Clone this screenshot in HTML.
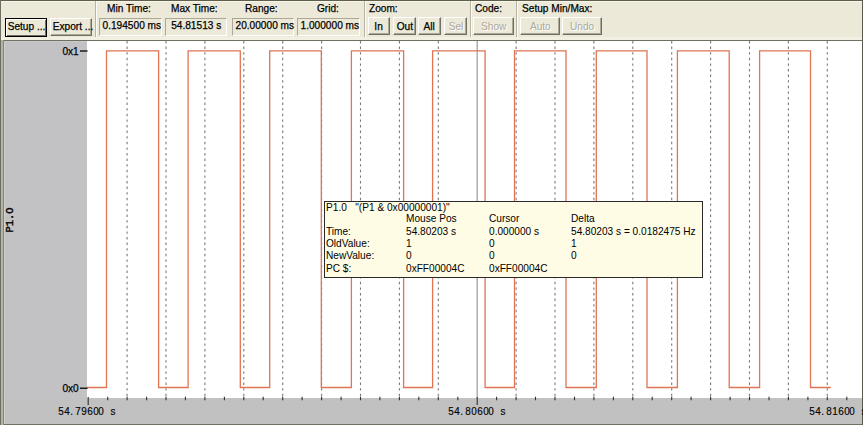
<!DOCTYPE html>
<html><head><meta charset="utf-8">
<style>
*{margin:0;padding:0;box-sizing:border-box}
html,body{width:863px;height:425px;overflow:hidden;background:#ece9d8;font-family:"Liberation Sans",sans-serif;font-size:11px;color:#000}
.t{display:inline-block;transform:scaleX(0.92);transform-origin:50% 50%;-webkit-text-stroke:0.25px #000}
.dis .t,#tip .t{-webkit-text-stroke:0}
.lbl .t,#tip .t{transform-origin:0 50%}
.t.r{transform-origin:100% 50%}
.a{position:absolute}
.lbl{position:absolute;top:1px;height:14px;line-height:14px;white-space:nowrap}
.box{position:absolute;top:18px;height:18px;border-top:1px solid #aca899;border-left:1px solid #aca899;border-bottom:1px solid #fff;border-right:1px solid #fff;line-height:13px;text-align:center;white-space:nowrap}
.btn{position:absolute;top:17px;height:18px;background:#ece9d8;border-top:1px solid #fff;border-left:1px solid #fff;border-right:1px solid #716f64;border-bottom:1px solid #716f64;box-shadow:inset -1px -1px 0 #aca899;text-align:center;line-height:15px;padding-top:1px;white-space:nowrap}
.dis{color:#aca899;text-shadow:1px 1px 0 #fff}
.sep{position:absolute;top:1px;height:36px;width:2px;border-left:1px solid #b9b5a5;border-right:1px solid #fcfbf5}
.mono{font-family:"Liberation Mono",monospace}
.ax{position:absolute;top:404.5px;font-family:"Liberation Sans",sans-serif;font-size:11px;white-space:nowrap;height:12px;line-height:12px;margin-top:0}
.ax i{display:inline-block;width:5.75px;text-align:center;font-style:normal}
.ax i.n{transform:scaleX(0.9);-webkit-text-stroke:0.15px #000}
.g{stroke:#787878;stroke-width:1.1;stroke-dasharray:2.4 3.2}
#tip{position:absolute;left:324px;top:201px;width:379px;height:77px;background:#fffce6;border:1px solid #2a2a2a;font-size:11px;line-height:12px;margin-top:0}
#tip div{position:absolute;white-space:nowrap}
</style></head><body>
<div class="a" style="left:0;top:0;width:863px;height:1px;background:#5f5f4c"></div>
<div class="a" style="left:0;top:1px;width:863px;height:1px;background:#f8f6ea"></div>
<div class="a" style="left:0;top:0;width:1px;height:425px;background:#6e6e62"></div>
<div class="a" style="left:1px;top:37px;width:862px;height:3px;background:#f2f0e3"></div>
<div class="a" style="left:3px;top:40px;width:860px;height:385px;background:#6f6f64"></div>
<div class="a" style="left:1px;top:40px;width:2px;height:385px;background:#b4b4a6"></div>
<div class="a" style="left:3px;top:40px;width:1px;height:385px;background:#84847a"></div>
<div class="a" style="left:4px;top:41px;width:1px;height:383px;background:#d0d0cc"></div>
<div class="a" style="left:5px;top:41px;width:82px;height:357px;background:#c2c1c3;border-top:1px solid #cacac6"></div>
<div class="a" style="left:87px;top:41px;width:775px;height:357px;background:#fff"></div>
<div class="a" style="left:5px;top:398px;width:857px;height:26px;background:#c2c1c2"></div>
<div class="a" style="left:862px;top:0;width:1px;height:425px;background:#5a5a50"></div>

<!-- toolbar -->
<div class="btn" id="b_setup" style="left:5px;top:18px;width:42px;height:19px;padding-top:0;border:1px solid #000;box-shadow:inset 1px 1px 0 #fff,inset -1px -1px 0 #716f64"><span class="t">Setup ...</span></div>
<div class="btn" id="b_export" style="left:50px;top:18px;width:42px;height:18px;padding-top:0"><span class="t">Export ...</span></div>
<div class="sep" style="left:95px"></div>

<div class="lbl" id="l_min" style="left:99px;width:63px;text-align:center"><span class="t">Min Time:</span></div>
<div class="box" id="x_min" style="left:99px;width:63px"><span class="t">0.194500 ms</span></div>
<div class="lbl" style="left:165px;width:62px;text-align:center"><span class="t">Max Time:</span></div>
<div class="box" style="left:165px;width:62px"><span class="t">54.81513 s</span></div>
<div class="lbl" style="left:232px;width:62px;text-align:center"><span class="t">Range:</span></div>
<div class="box" style="left:232px;width:62px"><span class="t">20.00000 ms</span></div>
<div class="lbl" style="left:297px;width:63px;text-align:center"><span class="t">Grid:</span></div>
<div class="box" style="left:297px;width:63px"><span class="t">1.000000 ms</span></div>
<div class="sep" style="left:364px"></div>

<div class="lbl" style="left:369px"><span class="t">Zoom:</span></div>
<div class="btn" style="left:368px;width:22px"><span class="t">In</span></div>
<div class="btn" style="left:393px;width:23px"><span class="t">Out</span></div>
<div class="btn" style="left:418px;width:23px"><span class="t">All</span></div>
<div class="btn dis" style="left:444px;width:23px"><span class="t">Sel</span></div>
<div class="sep" style="left:470px"></div>

<div class="lbl" style="left:475px"><span class="t">Code:</span></div>
<div class="btn dis" style="left:473px;width:41px"><span class="t">Show</span></div>
<div class="sep" style="left:516px"></div>

<div class="lbl" style="left:522px"><span class="t">Setup Min/Max:</span></div>
<div class="btn dis" style="left:520px;width:40px"><span class="t">Auto</span></div>
<div class="btn dis" style="left:562px;width:40px"><span class="t">Undo</span></div>

<!-- plot -->
<svg class="a" style="left:0;top:0" width="863" height="425" viewBox="0 0 863 425">
<line x1="127.1" y1="41" x2="127.1" y2="398" class="g"/>
<line x1="166.0" y1="41" x2="166.0" y2="398" class="g"/>
<line x1="204.9" y1="41" x2="204.9" y2="398" class="g"/>
<line x1="243.8" y1="41" x2="243.8" y2="398" class="g"/>
<line x1="282.7" y1="41" x2="282.7" y2="398" class="g"/>
<line x1="321.6" y1="41" x2="321.6" y2="398" class="g"/>
<line x1="360.5" y1="41" x2="360.5" y2="398" class="g"/>
<line x1="399.4" y1="41" x2="399.4" y2="398" class="g"/>
<line x1="438.3" y1="41" x2="438.3" y2="398" class="g"/>
<line x1="516.1" y1="41" x2="516.1" y2="398" class="g"/>
<line x1="555.0" y1="41" x2="555.0" y2="398" class="g"/>
<line x1="593.9" y1="41" x2="593.9" y2="398" class="g"/>
<line x1="632.8" y1="41" x2="632.8" y2="398" class="g"/>
<line x1="671.7" y1="41" x2="671.7" y2="398" class="g"/>
<line x1="710.6" y1="41" x2="710.6" y2="398" class="g"/>
<line x1="749.5" y1="41" x2="749.5" y2="398" class="g"/>
<line x1="788.4" y1="41" x2="788.4" y2="398" class="g"/>
<line x1="827.3" y1="41" x2="827.3" y2="398" class="g"/>
<line x1="477.2" y1="41" x2="477.2" y2="398" stroke="#a8a8a8" stroke-width="1.4"/>
<path d="M87 387.5H106.5V50.8H158.6V387.5H188.1V50.8H240.3V387.5H269.7V50.8H321.3V387.5H351.4V50.8H403.6V387.5H432.6V50.8H485.1V387.5H514.5V50.8H566.0V387.5H596.3V50.8H647.0V387.5H677.4V50.8H729.2V387.5H759.6V50.8H810.5V387.5H830.8" stroke="#e07454" stroke-width="1.3" fill="none" stroke-linejoin="miter"/>
<path d="M88.2 397V405M107.7 396.8V400.2M127.1 396.8V400.2M146.6 396.8V400.2M166.0 396.8V400.2M185.4 396.8V400.2M204.9 396.8V400.2M224.4 396.8V400.2M243.8 396.8V400.2M263.2 396.8V400.2M282.7 396.8V400.2M302.1 396.8V400.2M321.6 396.8V400.2M341.1 396.8V400.2M360.5 396.8V400.2M379.9 396.8V400.2M399.4 396.8V400.2M418.8 396.8V400.2M438.3 396.8V400.2M457.8 396.8V400.2M477.2 397V405M496.6 396.8V400.2M516.1 396.8V400.2M535.5 396.8V400.2M555.0 396.8V400.2M574.5 396.8V400.2M593.9 396.8V400.2M613.4 396.8V400.2M632.8 396.8V400.2M652.2 396.8V400.2M671.7 396.8V400.2M691.1 396.8V400.2M710.6 396.8V400.2M730.1 396.8V400.2M749.5 396.8V400.2M769.0 396.8V400.2M788.4 396.8V400.2M807.9 396.8V400.2M827.3 396.8V400.2M846.8 396.8V400.2" stroke="#303030" stroke-width="1.1" fill="none"/>
<path d="M80 51H87.5M80 388.2H87.5" stroke="#1c1c1c" stroke-width="1.5"/>
<text x="10" y="223" class="mono" font-size="10.5" style="stroke:#000;stroke-width:0.35" transform="rotate(-90 10 220)" text-anchor="middle">P1.O</text>
</svg>
<div class="a" style="left:60px;top:44.5px;width:19px;text-align:right"><span class="t r">0x1</span></div>
<div class="a" style="left:60px;top:382px;width:19px;text-align:right"><span class="t r">0x0</span></div>
<div class="ax" style="left:58px"><i class="n">5</i><i class="n">4</i><i class="n" style="text-align:left">.</i><i class="n">7</i><i class="n">9</i><i class="n">6</i><i class="n">0</i><i class="n">0</i><i> </i><i class="n">s</i></div>
<div class="ax" style="left:448px"><i class="n">5</i><i class="n">4</i><i class="n" style="text-align:left">.</i><i class="n">8</i><i class="n">0</i><i class="n">6</i><i class="n">0</i><i class="n">0</i><i> </i><i class="n">s</i></div>
<div class="ax" style="left:809px"><i class="n">5</i><i class="n">4</i><i class="n" style="text-align:left">.</i><i class="n">8</i><i class="n">1</i><i class="n">6</i><i class="n">0</i><i class="n">0</i><i> </i><i class="n">s</i></div>

<div id="tip">
<div style="left:1px;top:-1.4px"><span class="t">P1.0&nbsp;&nbsp;&nbsp;"(P1 &amp; 0x00000001)"</span></div>
<div style="left:81px;top:10px"><span class="t">Mouse Pos</span></div>
<div style="left:164px;top:10px"><span class="t">Cursor</span></div>
<div style="left:246px;top:10px"><span class="t">Delta</span></div>
<div style="left:1px;top:23px"><span class="t">Time:</span></div>
<div style="left:81px;top:23px"><span class="t">54.80203 s</span></div>
<div style="left:164px;top:23px"><span class="t">0.000000 s</span></div>
<div style="left:246px;top:23px"><span class="t">54.80203 s = 0.0182475 Hz</span></div>
<div style="left:1px;top:35px"><span class="t">OldValue:</span></div>
<div style="left:81px;top:35px"><span class="t">1</span></div>
<div style="left:164px;top:35px"><span class="t">0</span></div>
<div style="left:246px;top:35px"><span class="t">1</span></div>
<div style="left:1px;top:47px"><span class="t">NewValue:</span></div>
<div style="left:81px;top:47px"><span class="t">0</span></div>
<div style="left:164px;top:47px"><span class="t">0</span></div>
<div style="left:246px;top:47px"><span class="t">0</span></div>
<div style="left:1px;top:60px"><span class="t">PC $:</span></div>
<div style="left:81px;top:60px"><span class="t">0xFF00004C</span></div>
<div style="left:164px;top:60px"><span class="t">0xFF00004C</span></div>
</div>
</body></html>
